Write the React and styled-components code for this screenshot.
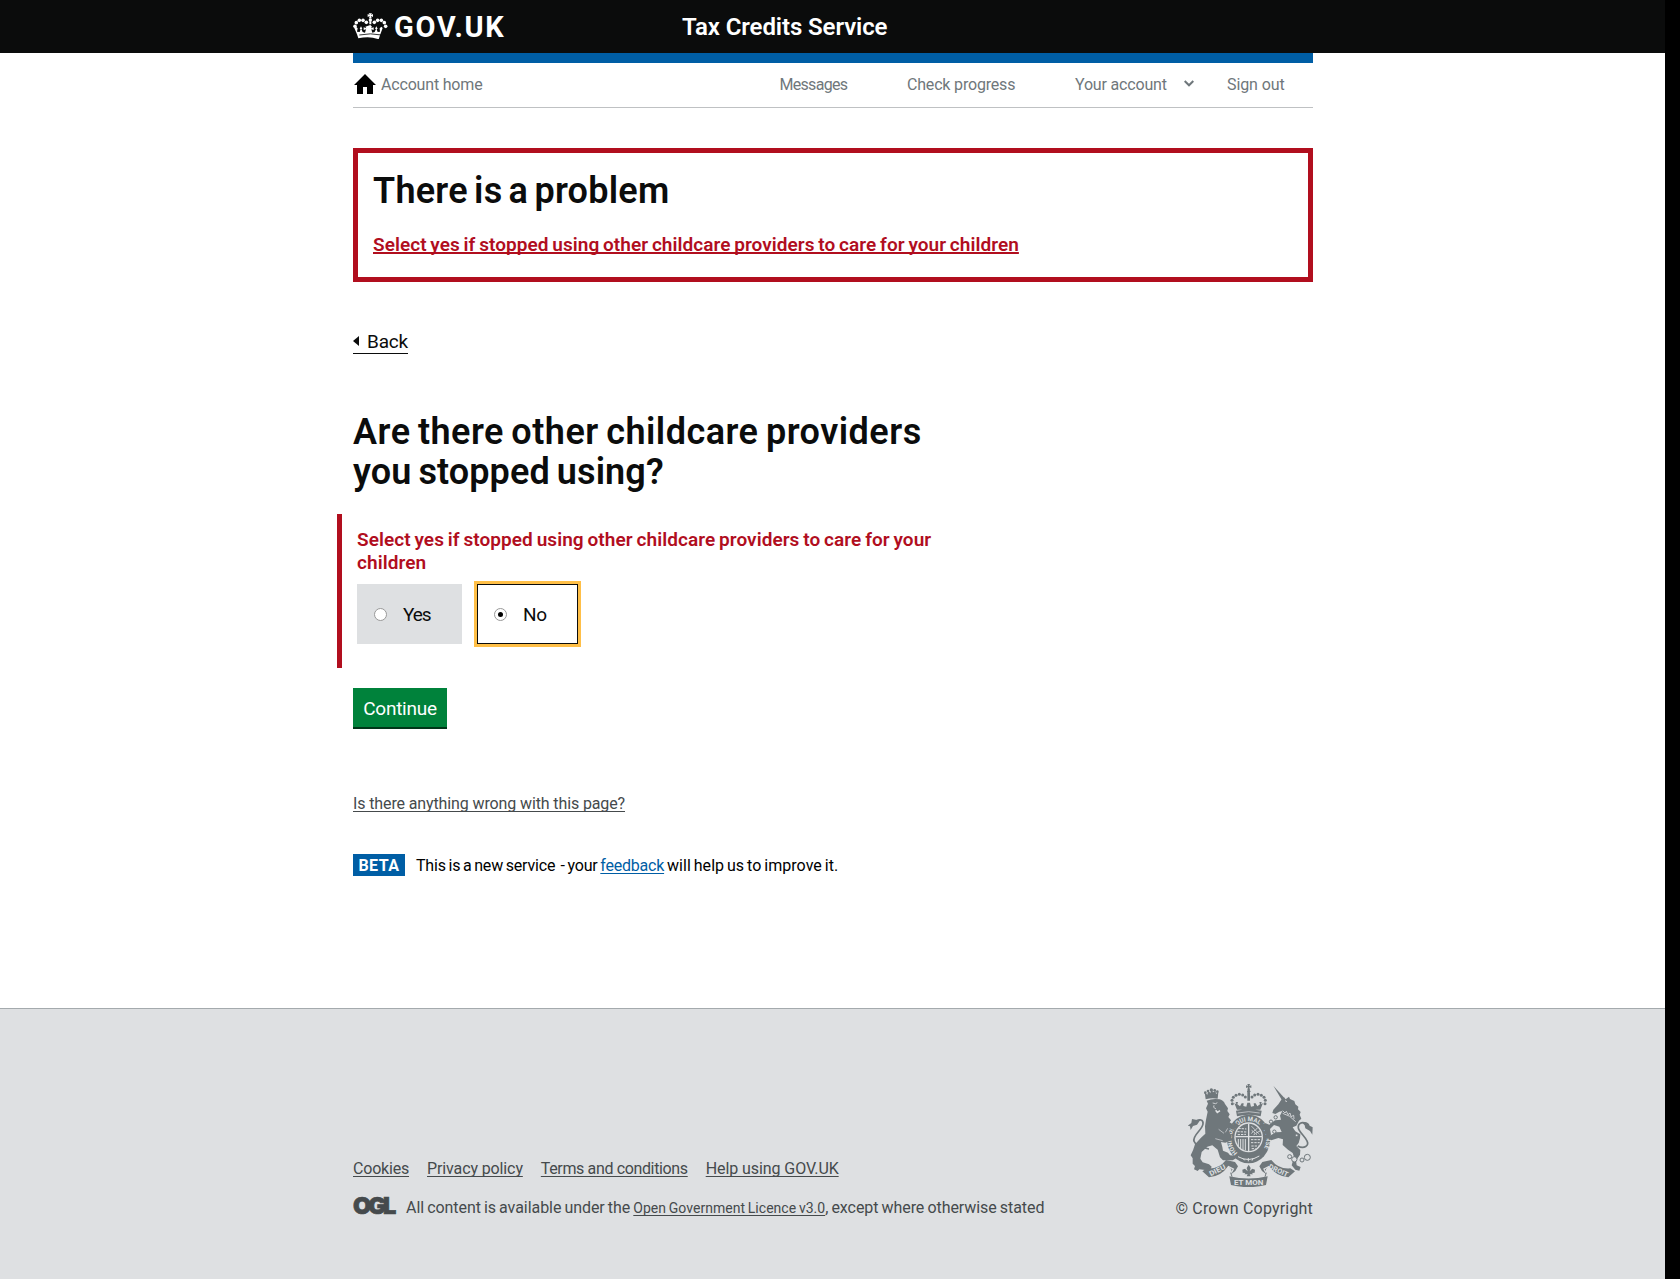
import React from 'react';
import styled, { createGlobalStyle } from 'styled-components';

const GlobalStyle = createGlobalStyle`
  *, *::before, *::after { box-sizing: border-box; }
  html, body { margin: 0; padding: 0; background: #000; }
  body { font-family: Roboto, "Liberation Sans", Arial, sans-serif; font-size: 16px; line-height: 20px; color: #0b0c0c; }
  h1, h2, p, ul, fieldset { margin: 0; padding: 0; border: 0; }
  ul { list-style: none; }
`;

const Page = styled.div`
  width: 1665px;
  height: 1279px;
  display: flex;
  flex-direction: column;
  background: #fff;
`;

const Header = styled.header`
  height: 53px;
  padding-left: 353px;
  display: flex;
  align-items: center;
  background: #0b0c0c;
  color: #fff;
`;

const Logo = styled.a`
  width: 329px;
  height: 53px;
  display: flex;
  align-items: center;
  gap: 6px;
  font-size: 29px;
  font-weight: 700;
  line-height: 53px;
  letter-spacing: 1.7px;
`;

const LogoText = styled.span`
  padding-top: 2px;
`;

const CrownSvg = styled.svg`
  width: 35px;
  height: 26px;
  margin-bottom: 2px;
`;

const ServiceName = styled.span`
  padding-top: 2px;
  font-size: 24px;
  font-weight: 600;
  line-height: 53px;
  letter-spacing: -0.1px;
`;

const Container = styled.div`
  width: 960px;
  margin-left: 353px;
`;

const AccountNav = styled.nav`
  height: 55px;
  display: flex;
  border-top: 10px solid #005ea5;
  border-bottom: 1px solid #bfc1c3;
  color: #6f777b;
  line-height: 44px;
`;

const NavItem = styled.a`
  width: ${p => p.$width}px;
  display: flex;
  align-items: center;
  white-space: nowrap;
  letter-spacing: ${p => p.$tracking ?? -0.18}px;
`;

const HomeIcon = styled.svg`
  width: 22px;
  height: 20px;
  margin: 0 5px 2px 1px;
`;

const Chevron = styled.svg`
  width: 10px;
  height: 7px;
  margin: 0 0 4px 17px;
`;

const ErrorSummary = styled.section`
  height: 134px;
  margin-top: 40px;
  padding: 18px 15px 0;
  border: 5px solid #b10e1e;
`;

const ErrorTitle = styled.h2`
  font-size: 36px;
  font-weight: 600;
  line-height: 40px;
  letter-spacing: 0.25px;
  word-spacing: -3px;
`;

const ErrorLink = styled.a`
  display: inline-block;
  margin-top: 22px;
  font-size: 19px;
  font-weight: 600;
  line-height: 24px;
  letter-spacing: 0.053px;
  word-spacing: -1px;
  color: #b10e1e;
  text-decoration: underline 2px;
  text-underline-offset: 1px;
  text-decoration-skip-ink: none;
`;

const BackLink = styled.a`
  display: flex;
  align-items: center;
  gap: 8px;
  width: 55px;
  height: 23px;
  margin-top: 49px;
  border-bottom: 1px solid #0b0c0c;
  font-size: 19px;
  line-height: 22px;
  letter-spacing: -0.2px;

  &::before {
    content: "";
    margin-bottom: 2px;
    border: 5px solid transparent;
    border-left: 0;
    border-right: 6px solid #0b0c0c;
  }
`;

const Heading = styled.h1`
  margin-top: 58px;
  font-size: 36px;
  font-weight: 600;
  line-height: 40px;
  word-spacing: -2px;
`;

const HeadingLine = styled.span`
  display: block;
  letter-spacing: ${p => p.$tracking}px;
`;

const Question = styled.fieldset`
  width: 640px;
  height: 154px;
  margin: 22px 0 0 -16px;
  padding: 14px 0 0 15px;
  border-left: 5px solid #b10e1e;
`;

const ErrorMessage = styled.p`
  width: 590px;
  color: #b10e1e;
  font-size: 19px;
  font-weight: 600;
  line-height: 23px;
  letter-spacing: 0.07px;
  word-spacing: -1px;
`;

const Options = styled.div`
  display: flex;
  gap: 15px;
  margin-top: 10px;
`;

const Option = styled.label`
  width: ${p => p.$width}px;
  height: 60px;
  padding-left: ${p => (p.$selected ? 16 : 17)}px;
  display: flex;
  align-items: center;
  gap: 16px;
  font-size: 19px;
  letter-spacing: ${p => p.$tracking}px;
  background: ${p => (p.$selected ? '#fff' : '#dee0e2')};
  border: ${p => (p.$selected ? '1px solid #0b0c0c' : '0')};
  outline: ${p => (p.$selected ? '3px solid #ffbf47' : 'none')};
`;

const OptionText = styled.span`
  padding-top: 2px;
`;

const Radio = styled.span`
  width: 13px;
  height: 13px;
  margin-top: 1px;
  display: grid;
  place-items: center;
  border: 1px solid #999;
  border-radius: 50%;
  background: #fff;

  &::after {
    content: "";
    width: 5px;
    height: 5px;
    border-radius: 50%;
    background: ${p => (p.$checked ? '#000' : 'transparent')};
  }
`;

const Continue = styled.button`
  display: block;
  width: 94px;
  height: 39px;
  margin: 20px 0 0;
  padding: 2px 0 0;
  border: 0;
  background: #00823b;
  box-shadow: 0 2px 0 #003618;
  color: #fff;
  font: 400 19px/37px Roboto, sans-serif;
  letter-spacing: -0.25px;
`;

const Link = styled.a`
  color: ${p => p.$color || 'inherit'};
  font-size: ${p => p.$size || 16}px;
  letter-spacing: ${p => p.$tracking || 0}px;
  text-decoration: underline 1px;
  text-underline-offset: 2px;
  text-decoration-skip-ink: none;
`;

const Report = styled.p`
  margin-top: 67px;
  color: #454a4c;
`;

const PhaseBanner = styled.div`
  display: flex;
  gap: 11px;
  margin-top: 40px;
  color: #000;
  white-space: pre;
`;

const PhaseTag = styled.strong`
  width: 52px;
  height: 22px;
  padding-top: 1px;
  background: #005ea5;
  color: #fff;
  font-weight: 700;
  line-height: 22px;
  text-align: center;
  letter-spacing: 0.5px;
`;

const PhaseText = styled.span`
  padding-top: 1px;
  line-height: 22px;
  letter-spacing: -0.18px;
  word-spacing: -1.1px;
`;

const PhaseTail = styled.span`
  letter-spacing: 0.04px;
`;

const Footer = styled.footer`
  height: 271px;
  margin-top: 131px;
  padding-left: 353px;
  border-top: 1px solid #a4aaad;
  background: #dee0e2;
  color: #454a4c;
`;

const FooterInner = styled.div`
  width: 960px;
  display: flex;
  justify-content: space-between;
`;

const FooterMain = styled.div`
  padding-top: 150px;
`;

const FooterLinks = styled.ul`
  display: flex;
  gap: 18px;
`;

const Licence = styled.div`
  display: flex;
  margin-top: 19px;
  letter-spacing: -0.06px;
  word-spacing: -0.8px;
  white-space: pre;
`;

const OglLogo = styled.strong`
  width: 53px;
  height: 17px;
  font: 900 23.5px/16px Inter, sans-serif;
  letter-spacing: -3px;
  -webkit-text-stroke: 0.7px #454a4c;
`;

const Copyright = styled.a`
  display: flex;
  flex-direction: column;
  align-items: flex-end;
  gap: 12px;
  padding-top: 75px;
  letter-spacing: 0.18px;
`;

const ArmsSvg = styled.svg`
  width: 125px;
  height: 103px;
  display: block;
  letter-spacing: 0;
`;

function Crown() {
  const beads = [[45, 78], [49, 67], [58, 60], [69, 60], [79, 66]];
  return (
    <CrownSvg viewBox="39 38 105 78" fill="#fff">
      <path d="M86 39h10l-3 5 6-3v9l-6-3 2 7h-8l2-7-6 3v-9l6 3z" />
      <circle cx="91" cy="59" r="5" />
      {beads.map(([x, y]) => (
        <g key={x}>
          <circle cx={x} cy={y} r="5.4" />
          <circle cx={182 - x} cy={y} r="5.4" />
        </g>
      ))}
      <path d="M88 63h6v9h-6zM91 74l5 5-3 5 8-3v8l-7-2 3 10 7-2 4-9-3-1 4-7 4 7-3 2 3 8 7-1-1-10 5-5 4 4-8 22-4 12Q91 107 55 114L51 102 43 83l5-4 5 5-2 10 8 1 3-8-3-2 4-7 4 7-3 1 4 9 7 2 3-10-7 2v-8l8 3-3-5z" />
      <path d="M58 104Q91 97 125 104" fill="none" stroke="#0b0c0c" strokeWidth="2.5" />
    </CrownSvg>
  );
}

function RoyalArms() {
  const grey = '#6f777b';
  const pale = '#dee0e2';
  const crownBeads = [[218, 101], [217, 91], [221, 82], [229, 76], [239, 73], [249, 75], [257, 81]];
  return (
    <ArmsSvg viewBox="85 42 375 309" fill={grey}>
      <path d="M263 42h8l-2 6 6-2v8l-6-2 2 8h-8l2-8-6 2v-8l6 2z" />
      <circle cx="267" cy="64" r="5" />
      {crownBeads.map(([x, y]) => (
        <g key={y + x}>
          <circle cx={x} cy={y} r="4.5" />
          <circle cx={534 - x} cy={y} r="4.5" />
        </g>
      ))}
      <path d="M263 67h8v25h-8zM224 99l6 4-2-7h7l-2 7 8 6 5-9h6l-1 8 9 2 3-12h8l3 12 9-2-1-8h6l5 9 8-6-2-7h7l-2 7 6-4-8 20H232zM229 122q38-9 77 0l-3 17q-36-10-71 0z" />
      <path d="M234 129q33-8 66 0" fill="none" stroke={pale} strokeWidth="2" />

      <ellipse cx="267" cy="207" rx="65" ry="73" />
      <ellipse cx="267" cy="202" rx="43" ry="45" fill={pale} />
      <ellipse cx="267" cy="202" rx="39" ry="41" />
      <path d="M267 161v82M227 200h80" stroke={pale} strokeWidth="4" />
      <g stroke={pale} strokeWidth="3" fill="none">
        <path d="M236 175l24 2M233 185l27 1M234 194l25-1" strokeDasharray="7 3" />
        <path d="M276 169l23 24M276 181l15 13M275 190l20-17M282 194l20-12" strokeDasharray="6 2" />
        <path d="M236 207v22M243 207v30M250 207v34M257 207v34" />
        <path d="M274 209h28M274 218h26M275 228h22M276 236h12" strokeDasharray="7 3" />
      </g>
      <defs>
        <path id="garter" d="M234 249A52 54 0 1 1 301 249" />
      </defs>
      <text fill={pale} fontSize="19" fontWeight="700" fontFamily="Roboto, sans-serif">
        <textPath href="#garter" textLength="240" lengthAdjust="spacingAndGlyphs">HONI SOIT QUI MAL Y PENSE</textPath>
      </text>
      <path d="M235 260q32 18 64-2M250 265l5 6M266 264v10M281 264l-4 8" fill="none" stroke={pale} strokeWidth="3" />

      <path d="M138 88l-3-21 8 7 2-10 8 4 3-10 4 9 8-4 1 9 7-5-2 19q-18-4-36 2z" />
      <circle cx="155" cy="60" r="5" />
      <circle cx="137" cy="68" r="4" />
      <circle cx="173" cy="65" r="4" />
      <circle cx="145" cy="63" r="4" />
      <circle cx="165" cy="61" r="4" />
      <path d="M141 92q18-8 39-4 12 3 16 14l9 13-2 8 7 10-4 8 8 10-4 6 14 9 5-7 7 5-5 9-13 6-8-4-2 11 8 12-4 14-15 6-13-2 4 15 2 11 15 6 6 8 14 1 4 8-10 6h-29l-9-9-7-23-16-13-15 4-17 16-4 20 7 11 19 6 8 7-3 7-17 3-17-2-5 5-11-5 3-10-7-7v-16l-6-9 7-15 6-18 18-20 13-12-1-22 3-20 5-24-5-10 6-14z" />
      <path d="M159 99l9 2 5-3M163 106l-1 6 7 5" fill="none" stroke={pale} strokeWidth="2.5" />
      <path d="M168 121l5 6 8-5" fill="none" stroke={pale} strokeWidth="5" />
      <path d="M177 178l16 12M167 206l22 6M197 187l7-12" fill="none" stroke={pale} strokeWidth="2" />
      <path d="M148 237Q108 229 103 214C97 196 128 180 130 162 132 148 119 147 107 154" fill="none" stroke={grey} strokeWidth="5" />
      <path d="M112 150l12-3-12 17-12 4-7 12-2-11-7-2 11-8 2-12z" />

      <path d="M341 47l34 38-8 6z" />
      <path d="M365 89l8-7 5 6 10-8 3 7 13 6 3 10 9 7-1 8 8 8-3 8 5 12-7 6-8 15-11 5 8 12 15 9-1 12-4 14-7 9 12 12-1 14-12 18 2 14 12 5-4 11-12-3-11-13 7-25-4-12-14-10-16-14 1-17-14-4-21 7-11-6-11 2-4-9 11-5 13 3 16-9 17-1-7-16-16-5-12 12 3 17-7 4-12-10-1-9-10-7 1-9 13-3 11 4 17-13 18-2-3-12 7-14-9 2-12 7-9-3 3-10 15-16z" />
      <path d="M376 92l6 3M369 130q22 5 39 25" fill="none" stroke={pale} strokeWidth="2.5" />
      <path d="M369 122l7 7 4-5 5 10 6-5 3 11 8-4 1 11" fill="none" stroke={pale} strokeWidth="2.5" />
      <path d="M414 228C434 239 449 226 442 213 435 198 419 187 416 174 414 160 426 154 440 161" fill="none" stroke={grey} strokeWidth="5" />
      <path d="M426 157q20-4 24 10l9 5-1 22-7-11-14-8-2-9z" />
      <g fill={pale} stroke={grey} strokeWidth="3">
        <circle cx="348" cy="142" r="5" />
        <circle cx="334" cy="155" r="5" />
        <circle cx="344" cy="185" r="5" />
        <circle cx="390" cy="260" r="6" />
        <circle cx="404" cy="268" r="8" />
        <circle cx="427" cy="270" r="6" />
        <circle cx="443" cy="262" r="9" />
        <circle cx="411" cy="196" r="4" />
      </g>

      <path d="M128 304l14-9q36 3 57-25l27 6 9 13-8 14-12 9v-15l-10-8q-20 30-57 33z" />
      <path d="M406 304l-14-9q-36 3-57-25l-27 6-9 13 8 14 12 9v-15l10-8q20 30 57 33z" />
      <path d="M205 289l16 8-6 11M329 289l-16 8 6 11" fill="none" stroke={pale} strokeWidth="4" />
      <path d="M209 319q58 13 115 0l-5 26q-52 13-105 0z" />
      <path d="M213 308l4 12M320 308l-4 12" stroke={grey} strokeWidth="3" />
      <path d="M267 284l6 10-3 10 8-8 8 3-1 9-8 1 3 4h-10l3 6h-12l3-6h-10l3-4-8-1-1-9 8-3 8 8-3-10z" />
      <g fill={pale} fontWeight="700" fontFamily="Roboto, sans-serif">
        <text transform="translate(153 319) rotate(-27)" fontSize="21" textLength="52" lengthAdjust="spacingAndGlyphs">DIEU</text>
        <text transform="translate(325 295) rotate(25)" fontSize="21" textLength="62" lengthAdjust="spacingAndGlyphs">DROIT</text>
        <text x="223" y="344" fontSize="22" textLength="88" lengthAdjust="spacingAndGlyphs">ET MON</text>
      </g>
    </ArmsSvg>
  );
}

export default function App() {
  return (
    <>
      <GlobalStyle />
      <Page>
        <Header>
          <Logo><Crown /><LogoText>GOV.UK</LogoText></Logo>
          <ServiceName>Tax Credits Service</ServiceName>
        </Header>
        <Container>
          <AccountNav>
            <NavItem $width={426.5}>
              <HomeIcon viewBox="0 0 22 20" fill="#000">
                <path d="M0 11 11 0l11 11h-3v9h-6v-7H9v7H3v-9z" />
              </HomeIcon>
              Account home
            </NavItem>
            <NavItem $width={127.5} $tracking={-0.7}>Messages</NavItem>
            <NavItem $width={168}>Check progress</NavItem>
            <NavItem $width={152}>
              Your account
              <Chevron viewBox="0 0 10 7" fill="none" stroke="#6f777b" strokeWidth="2">
                <path d="M.7 1 5 5.3 9.3 1" />
              </Chevron>
            </NavItem>
            <NavItem $width={60} $tracking={-0.1}>Sign out</NavItem>
          </AccountNav>
          <ErrorSummary>
            <ErrorTitle>There is a problem</ErrorTitle>
            <ErrorLink>Select yes if stopped using other childcare providers to care for your children</ErrorLink>
          </ErrorSummary>
          <BackLink>Back</BackLink>
          <Heading>
            <HeadingLine $tracking={0.49}>Are there other childcare providers </HeadingLine>
            <HeadingLine $tracking={0.1}>you stopped using?</HeadingLine>
          </Heading>
          <Question>
            <ErrorMessage>
              Select yes if stopped using other childcare providers to care for your children
            </ErrorMessage>
            <Options>
              <Option $width={105} $tracking={-1.1}><Radio /><OptionText>Yes</OptionText></Option>
              <Option $width={101} $tracking={-0.2} $selected><Radio $checked /><OptionText>No</OptionText></Option>
            </Options>
          </Question>
          <Continue>Continue</Continue>
          <Report>
            <Link $tracking={-0.12}>Is there anything wrong with this page?</Link>
          </Report>
          <PhaseBanner>
            <PhaseTag>BETA</PhaseTag>
            <PhaseText>
              {'This is a new service  - your '}
              <Link $color="#005ea5" $tracking={-0.22}>feedback</Link>
              <PhaseTail>{' will help us to improve it.'}</PhaseTail>
            </PhaseText>
          </PhaseBanner>
        </Container>
        <Footer>
          <FooterInner>
            <FooterMain>
              <FooterLinks>
                <li><Link $tracking={-0.2}>Cookies</Link></li>
                <li><Link $tracking={-0.12}>Privacy policy</Link></li>
                <li><Link $tracking={-0.36}>Terms and conditions</Link></li>
                <li><Link $tracking={-0.08}>Help using GOV.UK</Link></li>
              </FooterLinks>
              <Licence>
                <OglLogo>OGL</OglLogo>
                <span>
                  {'All content is available under the '}
                  <Link $size={14} $tracking={0.03}>Open Government Licence v3.0</Link>
                  , except where otherwise stated
                </span>
              </Licence>
            </FooterMain>
            <Copyright>
              <RoyalArms />
              © Crown Copyright
            </Copyright>
          </FooterInner>
        </Footer>
      </Page>
    </>
  );
}
